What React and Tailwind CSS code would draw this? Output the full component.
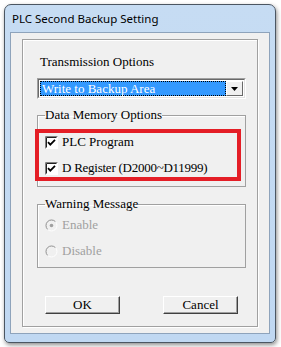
import React from 'react';

const serif = { fontFamily: '"Liberation Serif", "Times New Roman", serif' };

const CheckBox = () => (
  <svg width="13" height="13" viewBox="0 0 13 13" className="shrink-0">
    <rect x="0" y="0" width="13" height="13" fill="#fff" />
    <path d="M0.5 12.5V0.5H12.5" fill="none" stroke="#808080" />
    <path d="M1.5 11.5V1.5H11.5" fill="none" stroke="#202020" />
    <path d="M3 6.2 L5.3 8.6 L10 3.9" fill="none" stroke="#000" strokeWidth="1.8" />
  </svg>
);

const Radio = ({ checked }) => (
  <svg width="13" height="13" viewBox="0 0 13 13" className="shrink-0">
    <circle cx="6.5" cy="6.5" r="5.5" fill="#f0f0f0" stroke="#fff" />
    <path d="M2.6 10.4 A5.5 5.5 0 0 1 10.4 2.6" fill="none" stroke="#8a8a8a" />
    {checked && <circle cx="6.5" cy="6.5" r="1.8" fill="#a0a0a0" />}
  </svg>
);

const Button = ({ children }) => (
  <button className="w-[75px] h-[18px] bg-[#f0f0f0] border border-[#fff] border-r-[#404040] border-b-[#404040] shadow-[inset_-1px_-1px_0_#a0a0a0] text-[13px] leading-[14px] text-black">
    {children}
  </button>
);

export default function App() {
  return (
    <div className="w-[281px] h-[347px] bg-white pt-[4px] pl-[4px] overflow-hidden" style={serif}>
      <div className="w-[272px] h-[339px] flex flex-col rounded-t-[7px] rounded-b-[5px] border border-[#4b5662] bg-gradient-to-b from-[#c6dcf3] to-[#c0d8f2] px-[5px] pb-[8px] shadow-[1px_2px_4px_rgba(0,0,0,0.45)]">
        {/* title bar */}
        <div
          className="h-[27px] shrink-0 flex items-center pl-[2px] text-[11.5px] text-black"
          style={{ fontFamily: '"Noto Sans", "Open Sans", sans-serif' }}
        >
          PLC Second Backup Setting
        </div>

        {/* client area */}
        <div className="flex-1 border border-[#8ea3bb] bg-[#f0f0f0] px-[11px] pt-[6px] pb-[6px] flex flex-col">
          <div className="flex-1 border border-[#a0a0a0] shadow-[inset_1px_1px_0_#fff,1px_1px_0_#fff] pl-[14px] pr-[11px] pt-[14px] flex flex-col text-[13px] text-black">
            <div className="h-[16px] leading-[16px] pl-[3px]">Transmission Options</div>

            {/* combobox */}
            <div className="mt-[8px] h-[21px] flex border border-[#a0a0a0] border-r-white border-b-white">
              <div className="flex-1 flex border border-[#696969] border-r-[#e3e3e3] border-b-[#e3e3e3] bg-white p-[1px]">
                <div className="flex-1 bg-[#3399ff] text-white leading-[15px] pl-[2px] outline outline-1 outline-dotted outline-offset-[-1px] outline-black">
                  Write to Backup Area
                </div>
                <div className="w-[17px] bg-[#f0f0f0] border border-white border-r-[#696969] border-b-[#696969] flex items-center justify-center">
                  <svg width="7" height="4" viewBox="0 0 7 4">
                    <path d="M0 0H7L3.5 4Z" fill="#000" />
                  </svg>
                </div>
              </div>
            </div>

            {/* data memory options */}
            <fieldset className="mt-[8px] border border-[#a0a0a0] shadow-[inset_1px_1px_0_#fff] pl-[7px] pb-[5px]">
              <legend className="px-0 leading-[16px]">Data Memory Options</legend>
              <div className="mt-[6px] -ml-[10px] w-[206px] border-4 border-[#e41e26] pl-[6px] flex flex-col gap-[8px]">
                <div className="h-[18px] flex items-center gap-[4px]">
                  <CheckBox />
                  <span>PLC Program</span>
                </div>
                <div className="h-[18px] flex items-center gap-[4px]">
                  <CheckBox />
                  <span className="tracking-[-0.25px]">D Register (D2000~D11999)</span>
                </div>
              </div>
            </fieldset>

            {/* warning message */}
            <fieldset className="mt-[9px] border border-[#a0a0a0] shadow-[inset_1px_1px_0_#fff] pl-[7px] pb-[7px]">
              <legend className="px-0 leading-[16px]">Warning Message</legend>
              <div className="mt-[4px] flex flex-col gap-[8px] text-[#a0a0a0]">
                <div className="h-[18px] flex items-center gap-[4px]">
                  <Radio checked />
                  <span>Enable</span>
                </div>
                <div className="h-[18px] flex items-center gap-[4px]">
                  <Radio />
                  <span>Disable</span>
                </div>
              </div>
            </fieldset>

            {/* buttons */}
            <div className="mt-[28px] ml-[8px] flex gap-[43px]">
              <Button>OK</Button>
              <Button>Cancel</Button>
            </div>
          </div>
        </div>
      </div>
    </div>
  );
}
